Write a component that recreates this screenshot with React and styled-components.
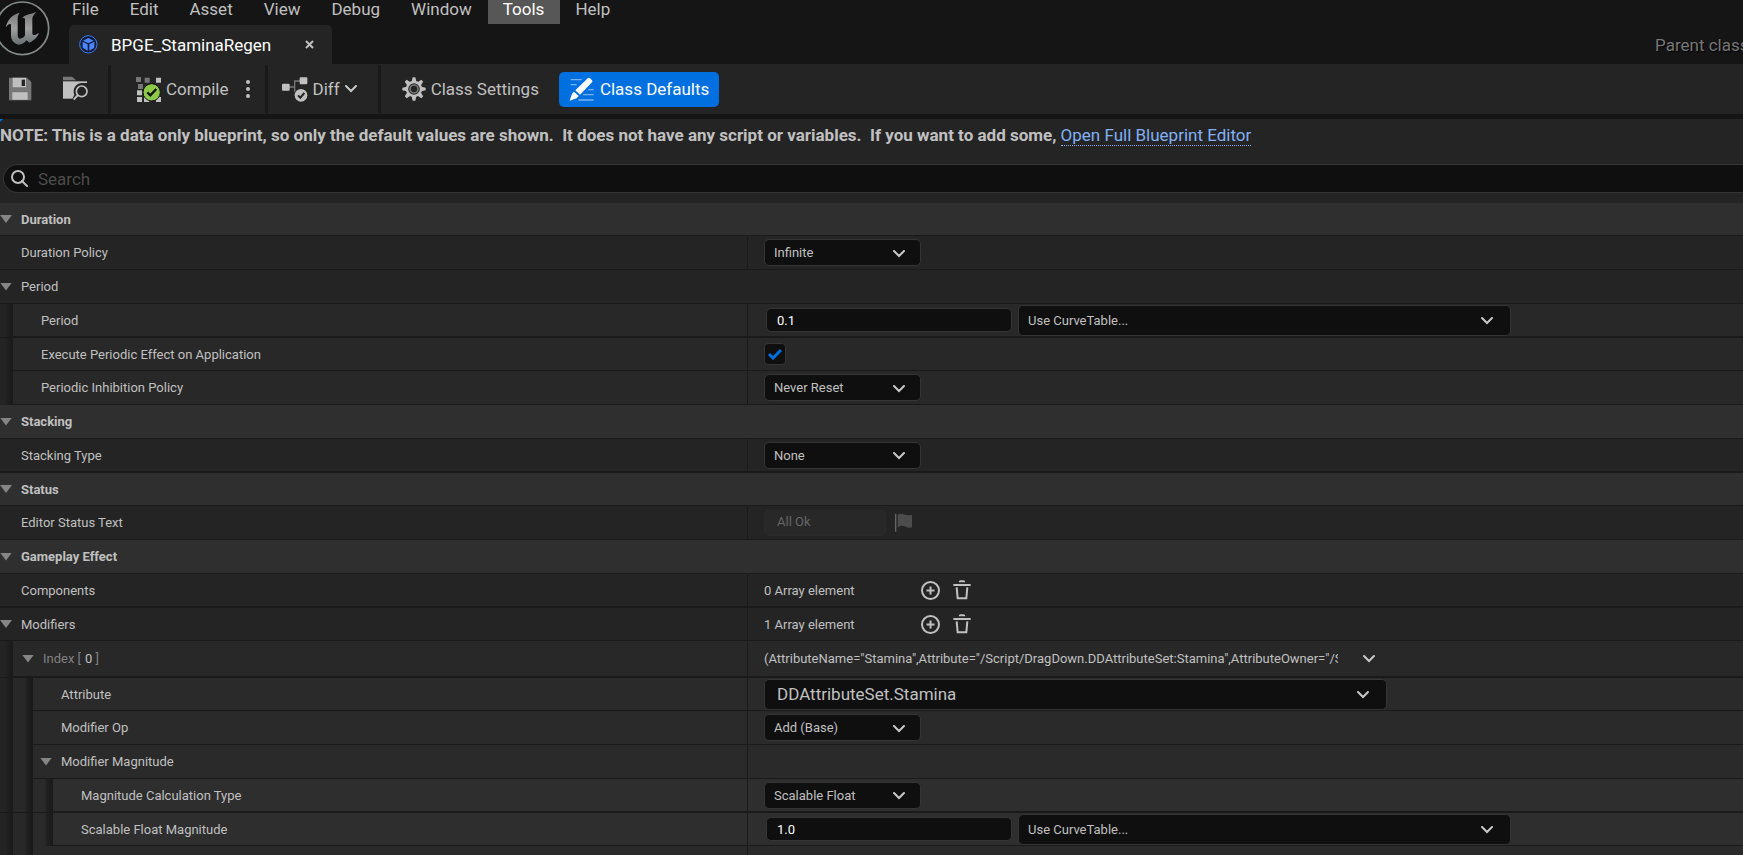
import { useState } from "react";
import styled, { createGlobalStyle, css } from "styled-components";

const GlobalStyle = createGlobalStyle`
  * {
    box-sizing: border-box;
  }
  body {
    margin: 0;
    background-color: #242424;
    color: #c0c0c0;
    font-family: Roboto, "Liberation Sans", sans-serif;
    font-size: 13px;
    overflow: hidden;
  }
  button, input, select {
    margin: 0;
    padding: 0;
    border: none;
    background: none;
    color: inherit;
    font: inherit;
    outline: none;
  }
  svg {
    display: block;
    flex-shrink: 0;
  }
`;

const Editor = styled.div`
  height: 100vh;
  display: flex;
  flex-direction: column;
  overflow: hidden;
  white-space: nowrap;
`;

/* header */
const Header = styled.header`
  display: flex;
  flex-shrink: 0;
  background-color: #151515;
  font-size: 17px;
`;
const LogoBox = styled.div`
  width: 57px;
  flex-shrink: 0;
`;
const HeaderMain = styled.div`
  flex: 1;
  min-width: 0;
`;
const MenuBar = styled.nav`
  display: flex;
`;
const MenuItem = styled.button`
  height: 24px;
  padding: 0 16px 6px 15px;
  line-height: 18px;
  color: ${(props) => (props.$active ? "#ffffff" : "#c0c0c0")};
  background-color: ${(props) => (props.$active ? "#575757" : "transparent")};
`;
const TabRow = styled.div`
  display: flex;
  align-items: center;
  padding: 1px 0 0 12px;
`;
const Tab = styled.div`
  display: flex;
  align-items: center;
  width: 263px;
  height: 39px;
  padding: 0 18px 0 10px;
  border-radius: 5px 5px 0 0;
  background-color: #242424;
  color: #ffffff;
`;
const TabTitle = styled.span`
  flex: 1;
  margin-left: 13px;
`;
const ParentClass = styled.span`
  width: 88px;
  margin-left: auto;
  overflow: hidden;
  color: #777777;
  text-shadow: 1px 1px 1px #000000;
`;

/* toolbar */
const Toolbar = styled.div`
  display: flex;
  height: 50px;
  flex-shrink: 0;
  font-size: 17px;
`;
const ToolGroup = styled.div`
  display: flex;
  align-items: center;
  gap: ${(props) => props.$gap || 0}px;
  padding: ${(props) => props.$padding};
  margin: 1px 0;
  & + & {
    border-left: 3px solid #191919;
  }
`;
const ToolBtn = styled.button`
  display: flex;
  align-items: center;
  gap: 5px;
  height: 35px;
  ${(props) =>
    props.$primary &&
    css`
      gap: 6px;
      padding: 0 10px;
      border-radius: 5px;
      background-color: #0070e0;
      color: #ffffff;
    `}
`;

const Note = styled.p`
  position: relative;
  flex-shrink: 0;
  margin: 0;
  height: 50px;
  padding-top: 6px;
  border-top: 5px solid #151515;
  font-size: 17px;
  line-height: 20px;
  font-weight: 700;
  white-space: pre;
  &::before {
    content: "";
    position: absolute;
    top: 0;
    left: 0;
    border-top: 3px solid #0070e0;
    border-right: 3px solid transparent;
  }
`;
const NoteLink = styled.a`
  display: inline-block;
  color: #82b1f5;
  font-weight: 400;
  text-decoration: none;
  border-bottom: 1px dotted #82b1f5;
`;
const SearchBox = styled.label`
  display: flex;
  align-items: center;
  gap: 10px;
  height: 29px;
  flex-shrink: 0;
  margin: 0 0 10px 3px;
  padding-left: 7px;
  border: 1px solid #353535;
  border-right: none;
  border-radius: 15px 0 0 15px;
  background-color: #0f0f0f;
`;
const SearchInput = styled.input`
  flex: 1;
  font-size: 17px;
  &::placeholder {
    color: #4c4c4c;
    opacity: 1;
  }
`;

/* details panel */
const levelColors = ["#242424", "#282828", "#2a2a2a", "#2e2e2e"];

const Row = styled.div`
  display: grid;
  grid-template-columns: minmax(0, 3fr) minmax(0, 4fr);
  flex-shrink: 0;
  height: ${(props) => props.$height}px;
  background-color: #1a1a1a;
  padding-bottom: ${(props) => (props.$thick ? 1 : 0)}px;
`;
const Indent = styled.div`
  width: ${(props) => (props.$level === 0 ? 13 : 20)}px;
  flex-shrink: 0;
  background: linear-gradient(
    to left,
    #191919,
    #1c1c1c 3px,
    #222222 7px,
    ${(props) => levelColors[props.$level]} 8px
  );
`;
const NameCell = styled.div`
  flex: 1;
  display: flex;
  align-items: center;
  min-width: 0;
  padding-left: ${(props) => props.$pad}px;
  border-bottom: 1px solid #1a1a1a;
  background-color: ${(props) => props.$bg};
`;
const NameSide = styled.div`
  display: flex;
`;
const ValueSide = styled.div`
  display: flex;
  align-items: center;
  padding-left: 16px;
  border-left: 1px solid ${(props) => (props.$divider ? "#1a1a1a" : props.$bg)};
  border-bottom: 1px solid #1a1a1a;
  background-color: ${(props) => props.$bg};
`;
const Name = styled.label`
  font-weight: ${(props) => (props.$bold ? 700 : 400)};
`;
const IndexName = styled.span`
  color: #808080;
  b {
    margin: 0 3px 0 4px;
    color: #c0c0c0;
    font-weight: 400;
  }
`;
const Expander = styled.button`
  width: 12px;
  height: 8px;
  margin-right: 9px;
  background-color: #858585;
  clip-path: polygon(0 0, 100% 0, 50% 100%);
`;

const SelectBox = styled.div`
  position: relative;
  width: ${(props) => props.$width}px;
  height: ${(props) => props.$height}px;
  svg {
    position: absolute;
    top: 50%;
    right: ${(props) => (props.$width > 200 ? 18 : 16)}px;
    margin-top: -3px;
    pointer-events: none;
  }
`;
const StyledSelect = styled.select`
  appearance: none;
  width: 100%;
  height: 100%;
  padding-left: ${(props) => (props.$large ? 12 : 9)}px;
  border: 1px solid #353535;
  border-radius: 5px;
  background-color: #0f0f0f;
  font-size: ${(props) => (props.$large ? 17 : 13)}px;
`;
const NumberInput = styled.input`
  width: 246px;
  height: 24px;
  margin: 0 6px 0 2px;
  padding-left: 10px;
  border: 1px solid #353535;
  border-radius: 5px;
  background-color: #0f0f0f;
  color: #ffffff;
`;
const StatusInput = styled.input`
  width: 122px;
  height: 26px;
  margin-right: 9px;
  padding: 0 12px 3px;
  border: 1px solid #2a2a2a;
  border-radius: 5px;
  background-color: #282828;
  color: #666666;
`;
const CheckLabel = styled.span`
  display: grid;
  width: 22px;
  height: 22px;
  > * {
    grid-area: 1 / 1;
    place-self: center;
  }
  svg {
    pointer-events: none;
  }
`;
const Checkbox = styled.input`
  appearance: none;
  width: 22px;
  height: 22px;
  border: 1px solid #353535;
  border-radius: 4px;
  background-color: #0f0f0f;
`;
const ArrayCount = styled.span`
  width: 157px;
`;
const IconBtn = styled.button`
  margin-right: 13px;
`;
const Summary = styled.span`
  width: 574px;
  margin-right: 25px;
  overflow: hidden;
`;

function Logo() {
  return (
    <svg width="51" height="57" viewBox="0 0 153 171">
      <defs>
        <linearGradient id="metal" x1="0" y1="0" x2="0" y2="1">
          <stop offset="0" stopColor="#777" />
          <stop offset="0.5" stopColor="#a0a0a0" />
          <stop offset="1" stopColor="#667070" />
        </linearGradient>
      </defs>
      <circle cx="67" cy="85" r="79" fill="#101010" stroke="#858b8b" strokeWidth="5" />
      <path
        d="M17 82C22 59 38 43 59 38C54 45 53 50 53 59V105C53 114 58 118 64 115C70 113 75 109 75 104V61C75 53 72 52 66 55C74 43 91 43 110 36C100 45 97 50 97 61V98C97 106 102 109 117 98C111 114 101 122 88 128L80 121C71 132 58 137 49 132C39 128 33 119 33 106V76C33 69 25 71 17 82Z"
        fill="url(#metal)"
      />
    </svg>
  );
}

function BlueprintIcon() {
  return (
    <svg width="19" height="19" viewBox="0 0 57 57">
      <circle cx="28" cy="28" r="26" fill="#101c38" stroke="#3f7df5" strokeWidth="3" />
      <path d="M28 9L44 17L28 25L12 17Z" fill="#4b86ff" />
      <path d="M11 20L26 28V47L11 38ZM46 20L31 28V47L46 38Z" fill="#4b86ff" />
    </svg>
  );
}

function SaveIcon() {
  return (
    <svg width="24" height="24" viewBox="0 0 72 72">
      <path d="M3 2H57L70 15V70H3Z" fill="#777" />
      <path d="M14 2H54V31H14ZM13 46H59V68H13Z" fill="#c0c0c0" />
      <path d="M41 8H51V27H41Z" fill="#242424" />
    </svg>
  );
}

function BrowseIcon() {
  return (
    <svg width="26" height="26" viewBox="0 0 78 78">
      <path d="M0 2H28L39 13H0Z" fill="#777" />
      <path d="M0 16H72V68H0Z" fill="#c0c0c0" />
      <path d="M78 21H57A25 25 0 0 0 34 56L24 78H78Z" fill="#242424" />
      <circle cx="56" cy="46" r="16" fill="none" stroke="#c0c0c0" strokeWidth="5" />
      <path d="M45 57L32 71" stroke="#c0c0c0" strokeWidth="6" />
    </svg>
  );
}

function CompileIcon() {
  return (
    <svg width="25" height="25" viewBox="0 0 75 75">
      <path d="M0 0H15V15H0ZM26 2H41V17H26ZM6 21H21V36H6Z" fill="#777" />
      <path d="M60 2H75V17H60ZM3 40H18V55H3ZM3 60H18V75H3ZM24 60H40V75H24ZM60 60H75V75H60Z" fill="#c0c0c0" />
      <circle cx="47" cy="46" r="26" fill="#8cc94b" stroke="#111" strokeWidth="3" />
      <path d="M34 46L43 55L61 36" fill="none" stroke="#111" strokeWidth="7" />
    </svg>
  );
}

function DiffIcon() {
  return (
    <svg width="26" height="25" viewBox="0 0 78 75">
      <path d="M20 30H38V12H56M38 30V44" fill="none" stroke="#777" strokeWidth="4" />
      <rect x="0" y="20" width="23" height="21" rx="3" fill="#c0c0c0" />
      <rect x="53" y="1" width="23" height="21" rx="3" fill="#c0c0c0" />
      <circle cx="57" cy="55" r="19" fill="#c0c0c0" />
      <path d="M48 55L55 62L67 48" fill="none" stroke="#242424" strokeWidth="6" />
    </svg>
  );
}

function GearIcon() {
  return (
    <svg width="24" height="24" viewBox="-36 -36 72 72">
      {[0, 45, 90, 135, 180, 225, 270, 315].map((angle) => (
        <path key={angle} d="M-7 -22L-4 -35H4L7 -22Z" fill="#c0c0c0" transform={`rotate(${angle})`} />
      ))}
      <circle r="21" fill="#242424" stroke="#c0c0c0" strokeWidth="7" />
      <circle r="12" fill="none" stroke="#777" strokeWidth="5" />
    </svg>
  );
}

function PencilIcon() {
  return (
    <svg width="25" height="25" viewBox="0 0 75 75">
      <path d="M5 8H38M5 23H23M58 38H74M42 53H74M28 69H74" stroke="#79b3ef" strokeWidth="4" />
      <path d="M57 3Q60 1 63 4L69 10Q72 13 69 16L33 53L19 40ZM15 44L29 57L23 64L2 71L9 50Z" fill="#fff" />
    </svg>
  );
}

function DotsIcon() {
  return (
    <svg width="4" height="18" viewBox="0 0 4 18" fill="#c0c0c0">
      <circle cx="2" cy="2" r="2" />
      <circle cx="2" cy="9" r="2" />
      <circle cx="2" cy="16" r="2" />
    </svg>
  );
}

function Chevron() {
  return (
    <svg width="12" height="8" viewBox="0 0 12 8" fill="none" stroke="#c8c8c8" strokeWidth="2">
      <path d="M1 1L6 6L11 1" strokeLinecap="round" />
    </svg>
  );
}

function CloseIcon() {
  return (
    <svg width="9" height="9" viewBox="0 0 9 9" stroke="#c0c0c0" strokeWidth="2">
      <path d="M1 1L8 8M8 1L1 8" />
    </svg>
  );
}

function SearchIcon() {
  return (
    <svg width="17" height="17" viewBox="0 0 17 17" fill="none" stroke="#c0c0c0" strokeWidth="2">
      <circle cx="7" cy="7" r="6" />
      <path d="M11 11L16 16" strokeLinecap="round" />
    </svg>
  );
}

function FlagIcon() {
  return (
    <svg width="18" height="19" viewBox="0 0 54 57">
      <path d="M2 2V56" stroke="#666" strokeWidth="4" />
      <path d="M8 5C23 -4 27 11 51 5V43C33 49 28 29 8 43Z" fill="#4c4c4c" />
    </svg>
  );
}

function PlusIcon() {
  return (
    <svg width="19" height="19" viewBox="0 0 38 38" fill="none" stroke="#c0c0c0" strokeWidth="4">
      <circle cx="19" cy="19" r="17" />
      <path d="M19 11V27M11 19H27" />
    </svg>
  );
}

function TrashIcon() {
  return (
    <svg width="18" height="20" viewBox="0 0 54 60">
      <path d="M17 7Q17 1 23 1H31Q37 1 37 7ZM1 12H53V18H1Z" fill="#c0c0c0" />
      <path d="M11 22L14 55H40L43 22" fill="none" stroke="#c0c0c0" strokeWidth="6" />
    </svg>
  );
}

function Dropdown({ id, value, width = 157, height = 27, large }) {
  return (
    <SelectBox $width={width} $height={height}>
      <StyledSelect id={id} aria-label={value} $large={large}>
        <option>{value}</option>
      </StyledSelect>
      <Chevron />
    </SelectBox>
  );
}

function CurveValue({ id, value }) {
  return (
    <>
      <NumberInput id={id} defaultValue={value} />
      <Dropdown value="Use CurveTable..." width={493} height={31} />
    </>
  );
}

function CheckValue({ id }) {
  const [checked, setChecked] = useState(true);
  return (
    <CheckLabel>
      <Checkbox id={id} type="checkbox" checked={checked} onChange={() => setChecked(!checked)} />
      {checked && (
        <svg width="16" height="12" viewBox="0 0 16 12" fill="none" stroke="#0070e0" strokeWidth="3">
          <path d="M2 6L6 10L14 2" />
        </svg>
      )}
    </CheckLabel>
  );
}

function ArrayValue({ count }) {
  return (
    <>
      <ArrayCount>{count} Array element</ArrayCount>
      <IconBtn aria-label="Add element">
        <PlusIcon />
      </IconBtn>
      <IconBtn aria-label="Remove all elements">
        <TrashIcon />
      </IconBtn>
    </>
  );
}

const rows = [
  { name: "Duration", header: true, height: 33 },
  { name: "Duration Policy", id: "durationPolicy", value: <Dropdown id="durationPolicy" value="Infinite" /> },
  { name: "Period", expand: true, noDivider: true },
  { name: "Period", id: "period", level: 1, thick: true, value: <CurveValue id="period" value="0.1" /> },
  {
    name: "Execute Periodic Effect on Application",
    id: "execute",
    level: 1,
    height: 33,
    value: <CheckValue id="execute" />,
  },
  {
    name: "Periodic Inhibition Policy",
    id: "inhibition",
    level: 1,
    value: <Dropdown id="inhibition" value="Never Reset" />,
  },
  { name: "Stacking", header: true },
  { name: "Stacking Type", id: "stacking", thick: true, value: <Dropdown id="stacking" value="None" /> },
  { name: "Status", header: true, height: 33 },
  {
    name: "Editor Status Text",
    id: "status",
    value: (
      <>
        <StatusInput id="status" defaultValue="All Ok" disabled />
        <FlagIcon />
      </>
    ),
  },
  { name: "Gameplay Effect", header: true },
  { name: "Components", thick: true, value: <ArrayValue count={0} /> },
  { name: "Modifiers", expand: true, height: 33, value: <ArrayValue count={1} /> },
  {
    name: (
      <IndexName>
        Index [<b>0</b>]
      </IndexName>
    ),
    level: 1,
    expand: true,
    element: true,
    height: 37,
    thick: true,
    value: (
      <>
        <Summary>
          (AttributeName="Stamina",Attribute="/Script/DragDown.DDAttributeSet:Stamina",AttributeOwner="/Script
        </Summary>
        <IconBtn aria-label="Element options">
          <Chevron />
        </IconBtn>
      </>
    ),
  },
  {
    name: "Attribute",
    id: "attribute",
    level: 2,
    height: 33,
    value: <Dropdown id="attribute" value="DDAttributeSet.Stamina" width={623} height={31} large />,
  },
  { name: "Modifier Op", id: "op", level: 2, value: <Dropdown id="op" value="Add (Base)" /> },
  { name: "Modifier Magnitude", level: 2, expand: true },
  {
    name: "Magnitude Calculation Type",
    id: "calculation",
    level: 3,
    thick: true,
    value: <Dropdown id="calculation" value="Scalable Float" />,
  },
  {
    name: "Scalable Float Magnitude",
    id: "magnitude",
    level: 3,
    height: 33,
    value: <CurveValue id="magnitude" value="1.0" />,
  },
  { level: 2 },
];

function DetailRow({ row }) {
  const { name, id, header, expand, element, noDivider, thick, value, level = 0, height = 34 } = row;
  const bg = header ? "#2f2f2f" : levelColors[level];
  const hasArrow = header || expand;
  let pad = level === 0 ? 0 : 7;
  if (element) pad = 9;
  if (!hasArrow) pad += 21;
  return (
    <Row $height={height} $thick={thick}>
      <NameSide>
        {levelColors.slice(0, level).map((color, i) => (
          <Indent key={color} $level={i} />
        ))}
        <NameCell $pad={pad} $bg={bg}>
          {hasArrow && <Expander aria-label="Toggle" />}
          <Name as={id ? "label" : "span"} htmlFor={id} $bold={header}>
            {name}
          </Name>
        </NameCell>
      </NameSide>
      <ValueSide $bg={bg} $divider={!header && !noDivider}>
        {value}
      </ValueSide>
    </Row>
  );
}

const menus = ["File", "Edit", "Asset", "View", "Debug", "Window", "Tools", "Help"];

function App() {
  return (
    <Editor>
      <GlobalStyle />
      <Header>
        <LogoBox>
          <Logo />
        </LogoBox>
        <HeaderMain>
          <MenuBar>
            {menus.map((menu) => (
              <MenuItem key={menu} $active={menu === "Tools"}>
                {menu}
              </MenuItem>
            ))}
          </MenuBar>
          <TabRow>
            <Tab>
              <BlueprintIcon />
              <TabTitle>BPGE_StaminaRegen</TabTitle>
              <button aria-label="Close tab">
                <CloseIcon />
              </button>
            </Tab>
            <ParentClass>Parent class:</ParentClass>
          </TabRow>
        </HeaderMain>
      </Header>
      <Toolbar>
        <ToolGroup $gap={31} $padding="0 19px 0 8px">
          <ToolBtn aria-label="Save">
            <SaveIcon />
          </ToolBtn>
          <ToolBtn aria-label="Browse">
            <BrowseIcon />
          </ToolBtn>
        </ToolGroup>
        <ToolGroup $gap={17} $padding="0 15px 0 25px">
          <ToolBtn>
            <CompileIcon />
            Compile
          </ToolBtn>
          <ToolBtn aria-label="Compile options">
            <DotsIcon />
          </ToolBtn>
        </ToolGroup>
        <ToolGroup $padding="0 21px 0 14px">
          <ToolBtn>
            <DiffIcon />
            Diff
            <Chevron />
          </ToolBtn>
        </ToolGroup>
        <ToolGroup $gap={20} $padding="0 0 0 21px">
          <ToolBtn>
            <GearIcon />
            Class Settings
          </ToolBtn>
          <ToolBtn $primary>
            <PencilIcon />
            Class Defaults
          </ToolBtn>
        </ToolGroup>
      </Toolbar>
      <Note>
        {"NOTE: This is a data only blueprint, so only the default values are shown.  It does not have any script or variables.  If you want to add some, "}
        <NoteLink href="#">Open Full Blueprint Editor</NoteLink>
      </Note>
      <SearchBox>
        <SearchIcon />
        <SearchInput placeholder="Search" aria-label="Search" />
      </SearchBox>
      {rows.map((row, i) => (
        <DetailRow key={i} row={row} />
      ))}
    </Editor>
  );
}

export default App;
